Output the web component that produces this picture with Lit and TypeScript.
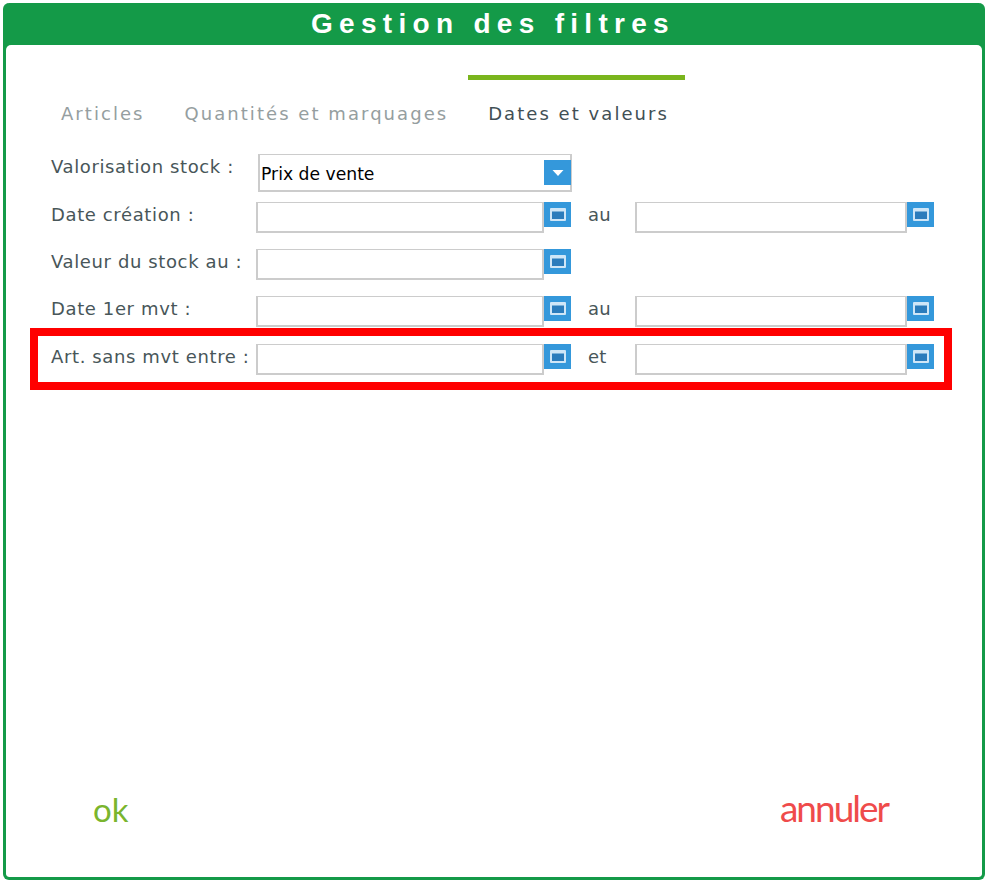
import { LitElement, html, css } from "lit";
import { customElement } from "lit/decorators.js";

type Row = { label: string; sep?: string; marked?: boolean };

const ROWS: Row[] = [
  { label: "Date création :", sep: "au" },
  { label: "Valeur du stock au :" },
  { label: "Date 1er mvt :", sep: "au" },
  { label: "Art. sans mvt entre :", sep: "et", marked: true },
];

@customElement("app-root")
export class AppRoot extends LitElement {
  static styles = css`
    :host {
      display: block;
      width: 990px;
      height: 882px;
      background: #fff;
      font-family: "DejaVu Sans", Verdana, sans-serif;
      padding: 3px 5px 5px 3px;
      box-sizing: border-box;
    }
    .frame {
      height: 100%;
      display: flex;
      flex-direction: column;
      border: 3px solid #149a48;
      border-top: 0;
      border-radius: 6px;
      background: #149a48;
      overflow: hidden;
    }
    .title {
      height: 42px;
      flex: none;
      text-align: center;
      color: #fff;
      font: bold 28px/41px "Liberation Sans", Arial, sans-serif;
      letter-spacing: 6.3px;
      padding-right: 2px;
    }
    .body {
      flex: 1;
      position: relative;
      display: flex;
      flex-direction: column;
      background: #fff;
      border-radius: 5px 5px 3px 3px;
      padding: 30px 0 0 36px;
    }
    .tabs {
      display: flex;
      height: 79px;
      flex: none;
      box-sizing: border-box;
      margin-left: -1px;
    }
    .tab {
      padding: 0 20px;
      border-top: 5px solid transparent;
      font-size: 18px;
      line-height: 68px;
      letter-spacing: 2.05px;
      color: #959ea0;
      height: 44px;
    }
    .tab.active {
      border-top-color: #7ab51d;
      color: #414f55;
      padding-right: 16px;
    }
    .form {
      display: flex;
      flex-direction: column;
      padding-left: 9px;
    }
    .row {
      display: flex;
      align-items: flex-start;
      height: 31px;
      margin-bottom: 16px;
    }
    .row.first {
      height: 38px;
      margin-bottom: 10px;
    }
    .row.last {
      margin-top: 1px;
    }
    .label {
      width: 205px;
      flex: none;
      font-size: 18px;
      line-height: 25px;
      letter-spacing: 0.62px;
      color: #485659;
      white-space: nowrap;
    }
    .select {
      width: 314px;
      height: 38px;
      margin-left: 2px;
      box-sizing: border-box;
      border: 2px solid #cccccc;
      border-top-width: 1px;
      display: flex;
      justify-content: space-between;
      align-items: flex-start;
      color: #000;
      font-size: 17.2px;
      line-height: 39px;
      padding-left: 1px;
    }
    .select .btn {
      margin-top: 5px;
      margin-right: -1px;
    }
    input {
      display: block;
      height: 31px;
      box-sizing: border-box;
      border: 2px solid #cccccc;
      border-top-width: 1px;
      background: #fff;
      padding: 0;
      margin: 0;
      outline: none;
    }
    .f1 {
      width: 288px;
    }
    .f2 {
      width: 272px;
    }
    .btn {
      width: 27px;
      height: 25px;
      flex: none;
      background: #3498db;
      display: flex;
      align-items: center;
      justify-content: center;
    }
    .sep {
      width: 64px;
      flex: none;
      padding-left: 17px;
      box-sizing: border-box;
      font-size: 18px;
      line-height: 25px;
      letter-spacing: 0.3px;
      color: #485659;
    }
    .mark {
      position: absolute;
      left: 24px;
      top: 283px;
      width: 922px;
      height: 62px;
      box-sizing: border-box;
      border: 8px solid #ff0000;
      pointer-events: none;
    }
    .actions {
      margin-top: auto;
      display: flex;
      justify-content: space-between;
      align-items: baseline;
      padding: 0 94px 48px 51px;
      font-family: "Lato", sans-serif;
      font-weight: 400;
      line-height: 40px;
    }
    .ok {
      color: #7ab52e;
      font-size: 33px;
    }
    .cancel {
      color: #ef4b4b;
      font-size: 37px;
      letter-spacing: -2px;
    }
  `;

  private calIcon() {
    return html`<div class="btn">
      <svg width="16" height="13" viewBox="0 0 16 13">
        <rect x="0" y="0" width="16" height="13" rx="1" fill="#cfe6f7" />
        <rect x="2" y="3.5" width="12" height="7.5" fill="#2b7cbc" />
      </svg>
    </div>`;
  }

  render() {
    return html`
      <div class="frame">
        <div class="title">Gestion des filtres</div>
        <div class="body">
          <div class="tabs">
            <div class="tab">Articles</div>
            <div class="tab">Quantités et marquages</div>
            <div class="tab active">Dates et valeurs</div>
          </div>
          <div class="form">
            <div class="row first">
              <div class="label">Valorisation stock :</div>
              <div class="select">
                <span>Prix de vente</span>
                <div class="btn">
                  <svg width="12" height="6" viewBox="0 0 12 6"><path d="M0.5 0H11.5L6 6Z" fill="#fff" /></svg>
                </div>
              </div>
            </div>
            ${ROWS.map(
              (r) => html`
                <div class="row ${r.marked ? "last" : ""}">
                  <div class="label">${r.label}</div>
                  <input class="f1" type="text" />
                  ${this.calIcon()}
                  ${r.sep
                    ? html`<div class="sep">${r.sep}</div>
                        <input class="f2" type="text" />
                        ${this.calIcon()}`
                    : ""}
                </div>
              `
            )}
          </div>
          <div class="mark"></div>
          <div class="actions">
            <span class="ok">ok</span>
            <span class="cancel">annuler</span>
          </div>
        </div>
      </div>
    `;
  }
}
